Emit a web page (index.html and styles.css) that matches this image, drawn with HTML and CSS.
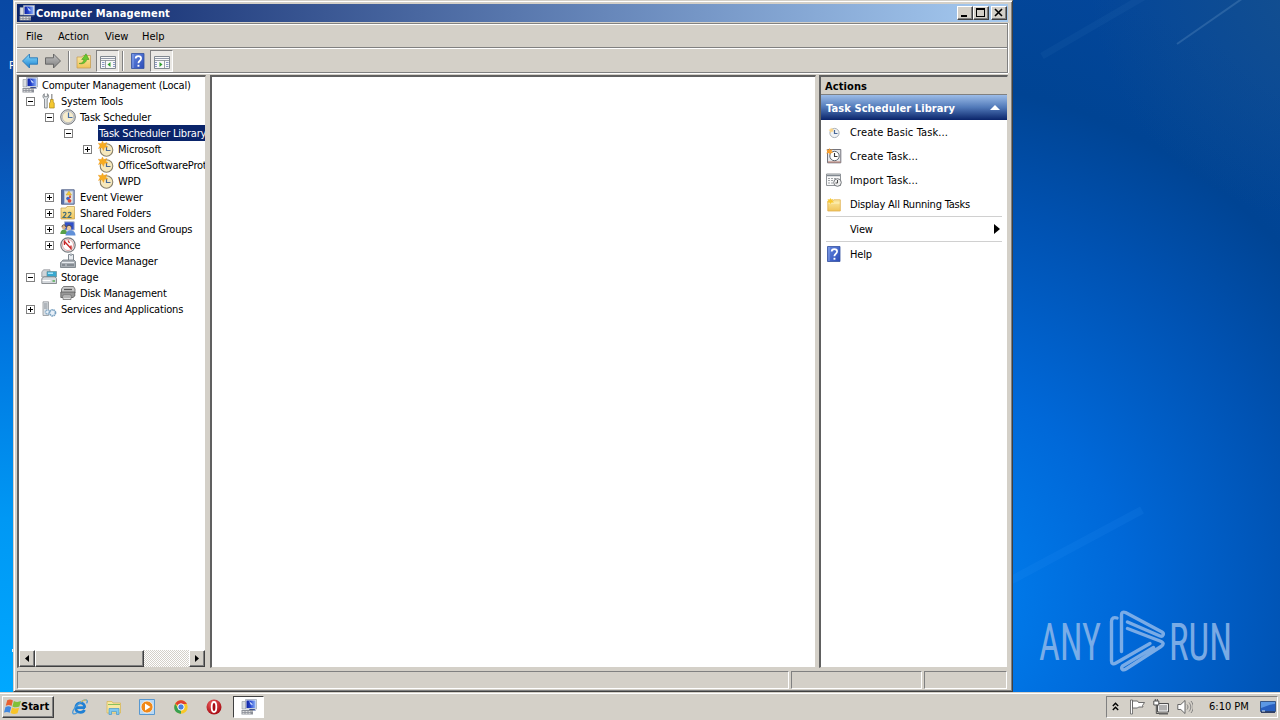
FILE: index.html
```
<!DOCTYPE html>
<html lang="en">
<head>
    <meta charset="UTF-8">
    <meta name="viewport" content="width=device-width, initial-scale=1.0">
    <title>Computer Management</title>
    <link rel="stylesheet" href="styles.css">
</head>
<body>
    <!-- Icon set -->
    <svg class="defs" width="0" height="0">
        <defs>
            <linearGradient id="gBlue" x1="0" y1="0" x2="0" y2="1">
                <stop offset="0" stop-color="#8cdcfc"/><stop offset="1" stop-color="#1880d0"/>
            </linearGradient>
            <linearGradient id="gGray" x1="0" y1="0" x2="0" y2="1">
                <stop offset="0" stop-color="#c0c0c0"/><stop offset="1" stop-color="#808080"/>
            </linearGradient>
            <linearGradient id="gScreen" x1="0" y1="0" x2="1" y2="0">
                <stop offset="0" stop-color="#0c20a0"/><stop offset=".45" stop-color="#2848d0"/><stop offset="1" stop-color="#90b4f8"/>
            </linearGradient>
            <linearGradient id="gHelp" x1="0" y1="0" x2="1" y2="1">
                <stop offset="0" stop-color="#6488e0"/><stop offset="1" stop-color="#2c4cb8"/>
            </linearGradient>
            <linearGradient id="gFolder" x1="0" y1="0" x2="0" y2="1">
                <stop offset="0" stop-color="#fbeaa4"/><stop offset="1" stop-color="#f0c458"/>
            </linearGradient>
            <radialGradient id="gOpera" cx=".4" cy=".3" r=".7">
                <stop offset="0" stop-color="#f06060"/><stop offset="1" stop-color="#a80c14"/>
            </radialGradient>
        </defs>
        <symbol id="i-mmc" viewBox="0 0 16 16">
            <path d="M1 2.500h3.500V10H1z" fill="#d8dce0" stroke="#9098a0" stroke-width=".6"/>
            <path d="M4.500.5h11V10h-11z" fill="#e4e8f0" stroke="#98a0b0" stroke-width=".7"/>
            <path d="M5.500 1.500h9V9h-9z" fill="url(#gScreen)"/>
            <path d="m8 2 4 3.500-2 .3L11 8z" fill="#d8e8ff"/>
            <path d="M8.500 10h5l1.500 1.500H8z" fill="#3c5090"/>
            <path d="M.5 11h11.500v4.500H.5z" fill="#8c9098"/>
            <path d="M1.500 12.500h2m1 0h2m1 0h2m1 0h1M1.500 14.300h2m1 0h2m1 0h2" stroke="#e0e0e0"/>
        </symbol>
        <symbol id="i-back" viewBox="0 0 16 16">
            <path d="M.5 8 7.500 1v3.800h8v6.400h-8V15z" fill="url(#gBlue)" stroke="#2878b8" stroke-width=".9"/>
        </symbol>
        <symbol id="i-forward" viewBox="0 0 16 16">
            <path d="M15.500 8 8.500 1v3.800h-8v6.400h8V15z" fill="url(#gGray)" stroke="#606060" stroke-width=".9"/>
        </symbol>
        <symbol id="i-up" viewBox="0 0 16 16">
            <path d="M1 4h5l1-1.500h7.500V15H1z" fill="url(#gFolder)" stroke="#c8a058" stroke-width=".8"/>
            <path d="M3 10.500c3.500 0 4.500-2 5-4H5.700L10 .8l3 5.700h-2.300C10 9.500 7.500 11.500 3 10.500z" fill="#68c830" stroke="#388c18" stroke-width=".5"/>
        </symbol>
        <symbol id="i-pane-left" viewBox="0 0 16 16">
            <path d="M.5 2.500h15v12H.5z" fill="#f8f8f8" stroke="#808890"/>
            <path d="M1 4.500h14" stroke="#9098a8"/>
            <path d="M1 6.500h14M5.500 6.500v8" stroke="#808890" stroke-width=".8"/>
            <path d="M2 8.500h2.500m-2.500 2h2.500m-2.500 2h2.500M13 8.500h2m-2 2h2m-2 2h2" stroke="#7080b8" stroke-width=".8"/>
            <path d="M10.500 8v5L7.500 10.500z" fill="#30a030"/>
        </symbol>
        <symbol id="i-pane-right" viewBox="0 0 16 16">
            <path d="M.5 2.500h15v12H.5z" fill="#f8f8f8" stroke="#808890"/>
            <path d="M1 4.500h14" stroke="#9098a8"/>
            <path d="M1 6.500h14M10.500 6.500v8" stroke="#808890" stroke-width=".8"/>
            <path d="M12 8.500h2.500m-2.500 2h2.500m-2.500 2h2.500M1 8.500h2m-2 2h2m-2 2h2" stroke="#7080b8" stroke-width=".8"/>
            <path d="M5.500 8v5l3-2.500z" fill="#30a030"/>
        </symbol>
        <symbol id="i-help" viewBox="0 0 16 16">
            <path d="M1.500.5H14v15H1.500z" fill="url(#gHelp)" stroke="#3450a0" stroke-width=".8"/>
            <path d="M3 1v14" stroke="#98b0f0" stroke-width=".8"/>
            <path d="M5.700 5.500c0-3.300 5.400-3.300 5.400 0 0 2.300-2.700 2.200-2.700 4.700" fill="none" stroke="#fff" stroke-width="1.700"/>
            <path d="M7.500 11.800h1.900v1.900H7.500z" fill="#fff"/>
        </symbol>
        <symbol id="i-tools" viewBox="0 0 16 16">
            <path d="M3.500 6v9h2.700V6c2-1.500 1.800-4 .2-5.300v3H3.300v-3C1.400 2 1.500 5 3.500 6z" fill="#e0e4e8" stroke="#74787c" stroke-width=".8"/>
            <path d="M10.800 1v6" stroke="#909090" stroke-width="1.300"/>
            <path d="M9.500 6.500h2.700V9l1 1v5H8.500v-5l1-1z" fill="#f4c830" stroke="#a88418" stroke-width=".7"/>
        </symbol>
        <symbol id="i-clock" viewBox="0 0 16 16">
            <circle cx="8" cy="8" r="7.300" fill="#d8dadc" stroke="#74787c"/>
            <circle cx="8" cy="8" r="5.700" fill="#f6eccc" stroke="#b0b0b0" stroke-width=".7"/>
            <path d="M8.500 3.500v5h4" fill="none" stroke="#4870a8" stroke-width="1.200"/>
        </symbol>
        <symbol id="i-task" viewBox="0 0 16 16">
            <circle cx="8.500" cy="9" r="6.300" fill="#f6e8bc" stroke="#88806c" stroke-width="1.100"/>
            <path d="M8.500 5.500v4h4" fill="none" stroke="#486898" stroke-width="1.200"/>
            <path d="m4.500 0 1.200 2.500 3.300-1L7.500 4l2.300 2-3.300.2L5.500 9.500 4 6.600.5 7.500 2 4.700.3 2.200l3 .4z" fill="#f8ac20" stroke="#e89418" stroke-width=".4"/>
        </symbol>
        <symbol id="i-event" viewBox="0 0 16 16">
            <path d="M1.500.8h12.700v14.400H1.500z" fill="#a8bce0" stroke="#485880" stroke-width=".9"/>
            <path d="M2 1h2v14H2z" fill="#5870a8"/>
            <path d="M5 2.500h7.500v11H5z" fill="#e8e4d8"/>
            <path d="m6 6 3-4 2.500 4z" fill="#f4cc38" stroke="#b89020" stroke-width=".4"/>
            <circle cx="8" cy="9.500" r="1.800" fill="#4068c8"/>
            <circle cx="9.500" cy="11.800" r="1.900" fill="#e04838"/>
            <path d="M10 6.500v2.500" stroke="#c83020" stroke-width="1.500"/>
        </symbol>
        <symbol id="i-shared" viewBox="0 0 16 16">
            <path d="M1 3h5l1-1.500h7.500V14H1z" fill="url(#gFolder)" stroke="#c8a458" stroke-width=".8"/>
            <path d="M3 8c1-1 3-1 3 .5S4 11 3 12.500h3.500M8 8c1-1 3-1 3 .5S9 11 8 12.500h3.500" fill="none" stroke="#487078" stroke-width="1.200"/>
        </symbol>
        <symbol id="i-users" viewBox="0 0 16 16">
            <path d="M4.500.8h9.700V9H4.500z" fill="#3050c8" stroke="#b0b8c8"/>
            <circle cx="3.800" cy="6.300" r="2" fill="#d8b088"/>
            <path d="M.3 13c0-6 7-6 7 0z" fill="#58a048"/>
            <circle cx="9" cy="7" r="2.300" fill="#e8c498"/>
            <path d="M2 5.800c0-2.600 3.700-2.600 3.700 0M6.700 6.500c0-3 4.600-3 4.600 0" fill="none" stroke="#584838"/>
            <path d="M5.500 14.500c0-7 10-7 10 0z" fill="#6090d8"/>
        </symbol>
        <symbol id="i-perf" viewBox="0 0 16 16">
            <circle cx="8" cy="8" r="7.200" fill="#f4f4f4" stroke="#74787c" stroke-width="1.200"/>
            <circle cx="8" cy="8" r="5.500" fill="#fff" stroke="#c88080" stroke-width=".7"/>
            <path d="M4.500 8V4.500L11 11.500V8.500M8 3.500 9.500 6" fill="none" stroke="#c82828" stroke-width="1.300"/>
        </symbol>
        <symbol id="i-device" viewBox="0 0 16 16">
            <path d="M8.500 8V1.500h5V8" fill="#e8ecf0" stroke="#808890"/>
            <path d="M10 .5h2v2.500h-2z" fill="#a8b0b8"/>
            <path d="M1.500 8.500 3 7h11l1.500 1.500v6H.5v-5z" fill="#a8aeb4" stroke="#707880" stroke-width=".8"/>
            <path d="M2 9.500h12" stroke="#e8ecf0"/>
            <path d="M2 12h3m2 0h7" stroke="#606870"/>
        </symbol>
        <symbol id="i-storage" viewBox="0 0 16 16">
            <path d="M.8 3 2.500.8H9V8H.8z" fill="#d0d4d8" stroke="#888c90" stroke-width=".7"/>
            <path d="M6 2.500h9.500V8H6z" fill="#38a8d0" stroke="#689098" stroke-width=".7"/>
            <path d="M7 3.500h5V5H7z" fill="#a8e4f8"/>
            <path d="M.8 9.500 3 7.800h11l1.500 1.700v5H.8z" fill="#d4d8dc" stroke="#74787c" stroke-width=".8"/>
            <path d="M1.500 11.500h8" stroke="#fff"/><path d="M11.500 12h2.500" stroke="#40a840" stroke-width="1.300"/>
        </symbol>
        <symbol id="i-disk" viewBox="0 0 16 16">
            <path d="M3.500 1.500h10L15 4v4H1.500V4z" fill="#c8c8c8" stroke="#606060" stroke-width=".8"/>
            <path d="M4 4.500h8" stroke="#585858" stroke-width="1.300"/>
            <path d="M.8 7h14v4L13 12.500H.8z" fill="#989898" stroke="#585858" stroke-width=".8"/>
            <path d="M3 10h8v4.500H3z" fill="#e0e0e0" stroke="#707070" stroke-width=".8"/>
            <path d="M4 12h6" stroke="#888"/>
        </symbol>
        <symbol id="i-services" viewBox="0 0 16 16">
            <path d="M2 .8h5.500v13.700H2z" fill="#dce0e4" stroke="#909498" stroke-width=".8"/>
            <path d="M3 3h3.500M3 5h3.500M3 7h3.500" stroke="#707880" stroke-width=".8"/>
            <circle cx="6.500" cy="11" r="2" fill="#e8f0f8" stroke="#88acc8" stroke-width="1.500" stroke-dasharray="1.200 .5"/>
            <circle cx="11.500" cy="11.800" r="3" fill="#e8f0f8" stroke="#78a0c0" stroke-width="1.700" stroke-dasharray="1.500 .6"/>
        </symbol>
        <symbol id="i-basic" viewBox="0 0 16 16">
            <circle cx="8.500" cy="9" r="4.600" fill="#f0f2f4" stroke="#a8b0b8"/>
            <path d="M8.500 6v3.500h3" fill="none" stroke="#486898" stroke-width="1.200"/>
            <path d="m5 3.500 1 1.500 2-.3-1 1.600.8 1.500-2-.2-1.500 1.400-.2-2L2.500 6l1.900-.8z" fill="#f8d488"/>
        </symbol>
        <symbol id="i-create" viewBox="0 0 16 16">
            <path d="M1.500 1.500h13.300v13.300H1.500z" fill="#e4e6ea" stroke="#74747c"/>
            <path d="M2 14h12.500" stroke="#b87868"/>
            <circle cx="8.500" cy="8" r="4.700" fill="#fff" stroke="#606870"/>
            <path d="M8.500 5v3.500h3" fill="none" stroke="#383838" stroke-width="1.100"/>
            <path d="m3.500 0 .8 2L6.500 1.300 5.500 3.200l1.700 1.600-2.300.1-1 2.100-.9-2L.3 5.500l1-2L.2 1.500l2.200.4z" fill="#f8a030"/>
        </symbol>
        <symbol id="i-import" viewBox="0 0 16 16">
            <path d="M.5 2h14v11.500H.5z" fill="#fafafa" stroke="#909498"/>
            <path d="M1 3.500h13" stroke="#808890" stroke-width="1.500"/>
            <path d="M2 6.500h2m1 0h2m1 0h2M2 8.500h2m1 0h2M2 11h2m1 0h2" stroke="#a0a4a8"/>
            <circle cx="11.500" cy="10.500" r="3.800" fill="#f0f0f0" stroke="#74787c"/>
            <path d="M11.500 8v3h-2" fill="none" stroke="#484848"/>
        </symbol>
        <symbol id="i-folder" viewBox="0 0 16 16">
            <path d="M1.800 5h5l1-1.200h6.500V15H1.800z" fill="url(#gFolder)" stroke="#e0b050" stroke-width=".8"/>
            <path d="M2.500 7h11" stroke="#fff4c0"/>
            <path d="m4.500 2 .8 1.500 2-.5-.9 1.700L8 6.500H5.500l-1 1.500-1-1.500H1.200L2.500 5l-1-1.700 2.100.3z" fill="#f8c830"/>
        </symbol>
        <symbol id="i-start" viewBox="0 0 18 16">
            <path d="M3.200 1.200C5.500 0 7 .2 8.900 1.500L7.500 7C5.800 5.800 4 5.800 1.800 6.800z" fill="#e86030"/>
            <path d="M9.900 2c2.200 1.200 4.500 1.200 7.100.1l-1.600 5.400c-2.400 1-4.800 1-7-.1z" fill="#80c038"/>
            <path d="M1.500 8c2.200-1 4-1 5.700.2l-1.500 5.600C4 12.700 2.200 12.700 0 13.600z" fill="#4088e0"/>
            <path d="M8.100 8.600c2.200 1.200 4.500 1.200 7 .1l-1.600 5.500c-2.300 1-4.700 1-6.900-.1z" fill="#f8c428"/>
        </symbol>
        <symbol id="i-ie" viewBox="0 0 16 16">
            <path d="M13 8.600H4.500M12.800 8.700C12.800 2 3.700 2.500 3.700 8.700c0 5.500 7 6 8.800 2.200" fill="none" stroke="#2080d4" stroke-width="2.700"/>
            <path d="M1 14.500C-1 11 11-.5 14.700 1.200c1 .6.600 2-.2 3.200M1 14.500c1 1 3 0 4.500-1" fill="none" stroke="#4898d8" stroke-width="1.300"/>
            <path d="M9 3c2-1.600 4-2.400 5.400-1.800" fill="none" stroke="#f0c040"/>
        </symbol>
        <symbol id="i-explorer" viewBox="0 0 16 16">
            <path d="M1 2.500h5L7 4h7.500v10H1z" fill="#f8e8a0" stroke="#d8b858" stroke-width=".8"/>
            <path d="M2 5.500h12" stroke="#88c060"/>
            <path d="M3 15.500V9.500h10v6h-2.500v-3h-5v3z" fill="#80c8f0" stroke="#4898c8" stroke-width=".7"/>
        </symbol>
        <symbol id="i-media" viewBox="0 0 16 16">
            <path d="M.5.5h15v15H.5z" fill="#b8d8f4" stroke="#5898d0"/>
            <circle cx="8" cy="8" r="6" fill="#f08818" stroke="#fff" stroke-width=".7"/>
            <path d="M6 4.500v7L11.500 8z" fill="#fff"/>
        </symbol>
        <symbol id="i-chrome" viewBox="0 0 16 16">
            <circle cx="8" cy="8" r="6.700" fill="#f8c828"/>
            <path d="M8 8 2.200 4.700C5-.4 11.800.2 13.900 5H8z" fill="#e04030"/>
            <path d="M2.200 4.700 6 11l2-1 0 4.700C2 14.600-.3 9 2.200 4.700z" fill="#38a050"/>
            <circle cx="8" cy="8" r="3.200" fill="#4880e0" stroke="#fff" stroke-width="1"/>
        </symbol>
        <symbol id="i-opera" viewBox="0 0 16 16">
            <circle cx="8" cy="8" r="7.500" fill="url(#gOpera)"/>
            <ellipse cx="8" cy="8" rx="2.300" ry="5" fill="#a80c14" stroke="#fff" stroke-width="1.800"/>
        </symbol>
        <symbol id="i-flag" viewBox="0 0 16 16">
            <path d="M1.500 1h2v14h-2z" fill="#fff" stroke="#606060" stroke-width=".8"/>
            <path d="M3.500 2h5l1 1.500h6l-2 3 .5 1.500H9.500l-1 1h-5z" fill="#fff" stroke="#606060" stroke-width=".9"/>
        </symbol>
        <symbol id="i-net" viewBox="0 0 16 16">
            <path d="M4.500 4.500h11v8.500h-11z" fill="#b0b0b0" stroke="#505050"/>
            <path d="M5.500 5.500h9V12h-9z" fill="none" stroke="#fff" stroke-width=".8"/>
            <path d="M6 14.800h9" stroke="#505050" stroke-width="1.300"/>
            <path d="M.8 2v4h5V2z" fill="#fff" stroke="#505050"/>
            <path d="M2.300 0v2M4.300 0v2M3.300 6v8.500h3" fill="none" stroke="#505050"/>
        </symbol>
        <symbol id="i-sound" viewBox="0 0 16 16">
            <path d="M.8 5.500h3L8 1.500v13l-4.200-4h-3z" fill="#fff" stroke="#585858" stroke-width=".9"/>
            <path d="M10 5.500c1.300 1.500 1.300 3.500 0 5M12 3.500c2.400 3 2.400 6 0 9M14 2c3 4 3 8 0 12" fill="none" stroke="#787878" stroke-width=".9"/>
        </symbol>
        <symbol id="i-desktop" viewBox="0 0 16 16">
            <path d="M.5 2.500h15v10H.5z" fill="#2860c0" stroke="#385888"/>
            <path d="M1 3h14v2C10 5 6 8 1 9z" fill="#5c98e4"/>
            <path d="M1 13.200h14" stroke="#203058" stroke-width="1.400"/>
            <path d="M2 12h3" stroke="#d8e8f8"/>
        </symbol>
    </svg>

    <div class="desktop">
        <svg class="rays" width="268" height="692" viewBox="0 0 268 692">
            <path d="M234-4 165 44" stroke="#6898c8" stroke-width="2" opacity=".3"/>
            <path d="M140-8 30 56" stroke="#4080c0" stroke-width="7" opacity=".1"/>
            <path d="M-6 583 130 510" stroke="#40a0ff" stroke-width="8" opacity=".1"/>
        </svg>
        <span class="shortcut-label">P</span>
        <span class="shortcut-mark"></span>

        <!-- Watermark -->
        <svg class="watermark" width="204" height="72" viewBox="0 0 204 72">
            <g fill="#8fb8ea" opacity=".85">
                <text x="3" y="51.500" textLength="62" lengthAdjust="spacingAndGlyphs">ANY</text>
                <text x="133" y="51.500" textLength="63" lengthAdjust="spacingAndGlyphs">RUN</text>
            </g>
            <g fill="none" stroke="#8fb8ea" stroke-width="3.400" stroke-linejoin="round" stroke-linecap="round" opacity=".85">
                <path d="M81 10c-3-1-5.500 0-5.500 3.500V53c0 3 2 3.500 4.500 2L114 35.500"/>
                <path d="M85.500 43.500V7c0-2.500 1.500-3.500 4-2.500L126 24c2.500 1.500 1 5-2 4L91.500 14"/>
                <path d="M91.500 20.500 124 33c4 1.500 4 3.500 1 5.500L90 61c-3 2-5.500 0-3.500-3l31-18.500"/>
            </g>
        </svg>

        <div class="window">
            <div class="titlebar">
                <svg class="icon"><use href="#i-mmc"/></svg>
                <span class="title">Computer Management</span>
                <div class="controls">
                    <button class="ctl"><svg width="12" height="10"><path d="M2 7h6v2H2z"/></svg></button>
                    <button class="ctl"><svg width="12" height="10"><path d="M1 0h9v9H1zM2 2v6h7V2z" fill-rule="evenodd"/></svg></button>
                    <button class="ctl close"><svg width="12" height="10"><path d="m2 1 7 7M9 1 2 8" stroke="#000" stroke-width="1.600"/></svg></button>
                </div>
            </div>

            <div class="bars">
                <div class="menubar">
                    <span class="m-file">File</span>
                    <span class="m-action">Action</span>
                    <span class="m-view">View</span>
                    <span>Help</span>
                </div>
                <div class="toolbar">
                    <span class="tool"><svg class="icon"><use href="#i-back"/></svg></span>
                    <span class="tool"><svg class="icon"><use href="#i-forward"/></svg></span>
                    <span class="divider"></span>
                    <span class="tool"><svg class="icon"><use href="#i-up"/></svg></span>
                    <span class="tool pressed"><svg class="icon"><use href="#i-pane-left"/></svg></span>
                    <span class="divider"></span>
                    <span class="tool"><svg class="icon"><use href="#i-help"/></svg></span>
                    <span class="tool pressed"><svg class="icon"><use href="#i-pane-right"/></svg></span>
                </div>
            </div>

            <div class="panes">
                <!-- Console tree -->
                <div class="pane tree-pane">
                    <div class="tree">
                        <div class="row"><svg class="icon"><use href="#i-mmc"/></svg><span class="label">Computer Management (Local)</span></div>
                        <div class="row lv1"><i class="box open"></i><svg class="icon"><use href="#i-tools"/></svg><span class="label">System Tools</span></div>
                        <div class="row lv2"><i class="box open"></i><svg class="icon"><use href="#i-clock"/></svg><span class="label">Task Scheduler</span></div>
                        <div class="row lv3"><i class="box open"></i><span class="icon"></span><span class="label selected">Task Scheduler Library</span></div>
                        <div class="row lv4"><i class="box"></i><svg class="icon"><use href="#i-task"/></svg><span class="label">Microsoft</span></div>
                        <div class="row lv4"><i class="box none"></i><svg class="icon"><use href="#i-task"/></svg><span class="label">OfficeSoftwareProtectionPlatform</span></div>
                        <div class="row lv4"><i class="box none"></i><svg class="icon"><use href="#i-task"/></svg><span class="label">WPD</span></div>
                        <div class="row lv2"><i class="box"></i><svg class="icon"><use href="#i-event"/></svg><span class="label">Event Viewer</span></div>
                        <div class="row lv2"><i class="box"></i><svg class="icon"><use href="#i-shared"/></svg><span class="label">Shared Folders</span></div>
                        <div class="row lv2"><i class="box"></i><svg class="icon"><use href="#i-users"/></svg><span class="label">Local Users and Groups</span></div>
                        <div class="row lv2"><i class="box"></i><svg class="icon"><use href="#i-perf"/></svg><span class="label">Performance</span></div>
                        <div class="row lv2"><i class="box none"></i><svg class="icon"><use href="#i-device"/></svg><span class="label">Device Manager</span></div>
                        <div class="row lv1"><i class="box open"></i><svg class="icon"><use href="#i-storage"/></svg><span class="label">Storage</span></div>
                        <div class="row lv2"><i class="box none"></i><svg class="icon"><use href="#i-disk"/></svg><span class="label">Disk Management</span></div>
                        <div class="row lv1"><i class="box"></i><svg class="icon"><use href="#i-services"/></svg><span class="label">Services and Applications</span></div>
                    </div>
                    <div class="scrollbar">
                        <span class="arrow"><svg width="4" height="7"><path d="M4 0v7L0 3.500z"/></svg></span>
                        <span class="thumb"></span>
                        <span class="track"></span>
                        <span class="arrow"><svg width="4" height="7"><path d="M0 0v7l4-3.500z"/></svg></span>
                    </div>
                </div>

                <div class="pane main-pane"></div>

                <!-- Actions -->
                <div class="pane actions-pane">
                    <div class="actions-title">Actions</div>
                    <div class="actions-group">
                        <span>Task Scheduler Library</span>
                        <svg width="10" height="5"><path d="M5 0l5 5H0z" fill="#fff"/></svg>
                    </div>
                    <div class="action wide"><svg class="icon"><use href="#i-basic"/></svg><span>Create Basic Task...</span></div>
                    <div class="action wide"><svg class="icon"><use href="#i-create"/></svg><span>Create Task...</span></div>
                    <div class="action wide"><svg class="icon"><use href="#i-import"/></svg><span>Import Task...</span></div>
                    <div class="action"><svg class="icon"><use href="#i-folder"/></svg><span>Display All Running Tasks</span></div>
                    <div class="line"></div>
                    <div class="action"><span class="icon"></span><span>View</span><svg class="more" width="6" height="10"><path d="M0 0v10l6-5z"/></svg></div>
                    <div class="line"></div>
                    <div class="action"><svg class="icon"><use href="#i-help"/></svg><span>Help</span></div>
                </div>
            </div>

            <div class="statusbar">
                <span class="cell"></span>
                <span class="cell mid"></span>
                <span class="cell end"></span>
            </div>
        </div>
    </div>

    <div class="taskbar">
        <div class="start"><svg width="18" height="16"><use href="#i-start"/></svg><span>Start</span></div>
        <div class="quick">
            <svg class="icon"><use href="#i-ie"/></svg>
            <svg class="icon"><use href="#i-explorer"/></svg>
            <svg class="icon"><use href="#i-media"/></svg>
            <svg class="icon"><use href="#i-chrome"/></svg>
            <svg class="icon"><use href="#i-opera"/></svg>
        </div>
        <div class="task-active"><svg class="icon"><use href="#i-mmc"/></svg></div>
        <div class="tray">
            <svg class="chevron" width="7" height="9"><path d="m.8 4 2.700-2.700L6.200 4M.8 8l2.700-2.700L6.200 8" fill="none" stroke="#000" stroke-width="1.400"/></svg>
            <svg class="icon"><use href="#i-flag"/></svg>
            <svg class="icon"><use href="#i-net"/></svg>
            <svg class="icon"><use href="#i-sound"/></svg>
            <span class="clock">6:10 PM</span>
            <svg class="icon"><use href="#i-desktop"/></svg>
        </div>
    </div>
</body>
</html>
```
FILE: styles.css
```
* {
    margin: 0;
    padding: 0;
    box-sizing: border-box;
}

body {
    width: 1280px;
    height: 720px;
    overflow: hidden;
    display: flex;
    flex-direction: column;
    font-family: Tahoma, "DejaVu Sans Condensed", "DejaVu Sans", sans-serif;
    font-stretch: condensed;
    font-size: 11px;
    color: #000;
}

.defs {
    position: absolute;
}

.icon {
    display: block;
    flex: none;
    width: 16px;
    height: 16px;
}

/* Desktop */
.desktop {
    position: relative;
    height: 692px;
    padding-left: 13px;
    background:
        linear-gradient(180deg, #0848a4 0%, #0850b0 20%, #0070dc 45%, #0098f4 75%, #00a8ff 100%) 0 0 / 13px 100% no-repeat,
        radial-gradient(circle at 1330px -20px, rgba(40, 90, 130, 0.5), rgba(40, 90, 130, 0) 240px),
        radial-gradient(circle at 900px 600px, #0078e8 110px, #0068d8 230px, #0052b2 400px, #004494 520px, #03469a 640px);
}

.rays {
    position: absolute;
    left: 1012px;
    top: 0;
}

.shortcut-label {
    position: absolute;
    left: 9px;
    top: 59px;
    color: #fff;
}

.shortcut-mark {
    position: absolute;
    left: 12px;
    top: 649px;
    width: 2px;
    height: 3px;
    background: #d8f0ff;
}

.watermark {
    position: absolute;
    left: 1036px;
    top: 608px;
    font-family: Roboto, sans-serif;
    font-size: 52px;
}

/* Window frame */
.window {
    position: relative;
    width: 1000px;
    height: 692px;
    padding: 3px 4px 2px 2px;
    display: flex;
    flex-direction: column;
    background: #d4d0c8;
    border: 1px solid #d4d0c8;
    border-right-color: #404040;
    border-bottom-color: #404040;
    box-shadow: inset 1px 1px #fff, inset -1px -1px #808080;
}

.titlebar {
    height: 18px;
    margin-left: 1px;
    padding: 0 1px 0 2px;
    display: flex;
    align-items: center;
    background: linear-gradient(90deg, #0a246a, #a6caf0);
}

.title {
    margin-left: 1px;
    color: #fff;
    font-weight: bold;
    letter-spacing: 0.15px;
}

.controls {
    display: flex;
    margin-left: auto;
}

.ctl {
    width: 16px;
    height: 14px;
    padding: 1px;
    background: #d4d0c8;
    border: 1px solid #fff;
    border-right-color: #404040;
    border-bottom-color: #404040;
    box-shadow: inset -1px -1px #808080;
}

.ctl svg {
    display: block;
}

.ctl.close {
    margin-left: 2px;
}

.bars {
    height: 50px;
    margin-top: 1px;
    border: 1px solid #808080;
    border-left-color: #fff;
    box-shadow: inset 0 1px #fff, 0 1px #fff, 1px 0 #fff;
}

.menubar {
    height: 24px;
    padding: 2px 0 0 9px;
    display: flex;
    align-items: center;
    border-bottom: 1px solid #808080;
}

.menubar .m-file { width: 32px; }
.menubar .m-action { width: 47px; }
.menubar .m-view { width: 37px; }

.toolbar {
    height: 24px;
    padding-left: 2px;
    display: flex;
    align-items: center;
    border-top: 1px solid #fff;
}

.tool {
    width: 23px;
    height: 22px;
    padding: 3px;
}

.tool.pressed {
    border: 1px solid #808080;
    border-right-color: #fff;
    border-bottom-color: #fff;
    background: #eae8e4;
}

.divider {
    width: 2px;
    height: 20px;
    margin: 0 3px;
    border-left: 1px solid #808080;
    border-right: 1px solid #fff;
}

/* Panes */
.panes {
    display: flex;
    gap: 3px;
    height: 593px;
    margin-top: 2px;
    padding-left: 1px;
}

.pane {
    background: #fff;
    border-top: 2px solid #606060;
    border-left: 2px solid #606060;
    border-right: 1px solid #d4d0c8;
    border-bottom: 1px solid #d4d0c8;
    overflow: hidden;
}

.tree-pane {
    width: 189px;
    margin-right: 1px;
    display: flex;
    flex-direction: column;
}

.main-pane {
    width: 606px;
}

.actions-pane {
    flex: 1;
}

.tree {
    flex: 1;
    letter-spacing: -0.2px;
}

.row {
    height: 16px;
    padding-left: 3px;
    display: flex;
    align-items: center;
    white-space: nowrap;
}

.lv2 { padding-left: 22px; }
.lv3 { padding-left: 41px; }
.lv4 { padding-left: 60px; }

.box {
    flex: none;
    width: 9px;
    height: 9px;
    margin: 0 6px 0 4px;
    border: 1px solid #808080;
    background:
        linear-gradient(#000, #000) center / 5px 1px no-repeat,
        linear-gradient(#000, #000) center / 1px 5px no-repeat;
}

.box.open {
    background: linear-gradient(#000, #000) center / 5px 1px no-repeat;
}

.box.none {
    visibility: hidden;
}

.label {
    margin-left: 3px;
    padding: 0 1px;
    height: 16px;
    line-height: 17px;
}

.label.selected {
    color: #fff;
    background: #0a246a;
}

.scrollbar {
    display: flex;
    height: 17px;
}

.arrow,
.thumb {
    background: #d4d0c8;
    border: 1px solid #fff;
    border-right-color: #404040;
    border-bottom-color: #404040;
    box-shadow: inset -1px -1px #808080;
}

.arrow {
    width: 16px;
    display: flex;
    align-items: center;
    justify-content: center;
}

.thumb {
    width: 109px;
}

.track {
    flex: 1;
    background: repeating-conic-gradient(#fff 0 25%, #d4d0c8 0 50%) 0 0 / 2px 2px;
}

/* Actions pane */
.actions-title {
    height: 18px;
    padding-left: 4px;
    line-height: 19px;
    font-weight: bold;
    letter-spacing: 0.1px;
    background: #d4d0c8;
    border-bottom: 1px solid #808080;
}

.actions-group {
    height: 25px;
    padding: 0 7px 0 5px;
    display: flex;
    align-items: center;
    justify-content: space-between;
    color: #fff;
    font-weight: bold;
    letter-spacing: 0.1px;
    background: linear-gradient(#9cbce8, #5078b8 50%, #0a246a);
}

.actions-group span {
    padding-top: 1px;
}

.action {
    height: 24px;
    padding-left: 5px;
    display: flex;
    align-items: center;
    gap: 8px;
    letter-spacing: -0.2px;
}

.action.wide {
    letter-spacing: 0.1px;
}

.action span {
    padding-top: 1px;
}

.more {
    margin-left: auto;
    margin-right: 7px;
}

.line {
    height: 1px;
    margin: 0 5px;
    background: #d0d0d0;
}

/* Status bar */
.statusbar {
    display: flex;
    gap: 2px;
    height: 18px;
    margin-top: 3px;
    padding: 0 1px;
}

.cell {
    flex: 1;
    border: 1px solid #808080;
    border-right-color: #fff;
    border-bottom-color: #fff;
}

.cell.mid {
    flex: none;
    width: 131px;
}

.cell.end {
    flex: none;
    width: 83px;
}

/* Taskbar */
.taskbar {
    height: 28px;
    padding: 2px;
    display: flex;
    align-items: center;
    background: #d4d0c8;
    border-top: 1px solid #d4d0c8;
    box-shadow: inset 0 1px #fff;
}

.start {
    width: 52px;
    height: 22px;
    padding-left: 1px;
    display: flex;
    align-items: center;
    font-weight: bold;
    border: 1px solid #fff;
    border-right-color: #404040;
    border-bottom-color: #404040;
    box-shadow: inset -1px -1px #808080;
}

.start span {
    margin-left: -1px;
}

.quick {
    display: flex;
    gap: 17.5px;
    margin-left: 18px;
}

.task-active {
    width: 31px;
    height: 22px;
    margin-left: 11px;
    display: flex;
    align-items: center;
    justify-content: center;
    background: #fff;
    border: 1px solid #404040;
    border-right-color: #fff;
    border-bottom-color: #fff;
}

.tray {
    width: 172px;
    height: 22px;
    margin-left: auto;
    padding-left: 5px;
    display: flex;
    align-items: center;
    gap: 8px;
    border: 1px solid #808080;
    border-right-color: #fff;
    border-bottom-color: #fff;
}

.tray .chevron {
    margin-right: 2px;
}

.clock {
    width: 43px;
    margin-left: 8px;
    white-space: nowrap;
}
```
